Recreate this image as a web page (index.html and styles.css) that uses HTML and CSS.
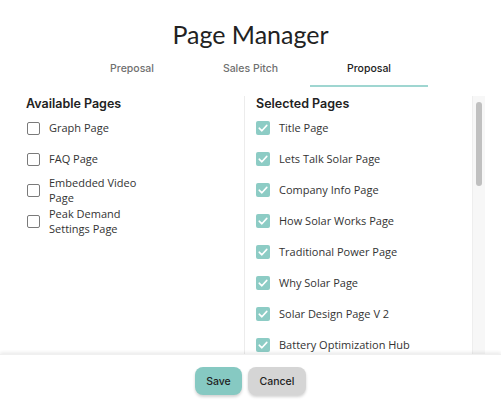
FILE: index.html
```html
<!DOCTYPE html>
<html>
<head>
<meta charset="utf-8">
<link rel="stylesheet" href="styles.css">
</head>
<body>
<div class="modal">
  <h1 class="title">Page Manager</h1>
  <nav class="tabs">
    <div class="tab">Preposal</div>
    <div class="tab">Sales Pitch</div>
    <div class="tab active">Proposal</div>
  </nav>
  <div class="content">
    <section class="col left">
      <h2 class="heading">Available Pages</h2>
      <div class="row"><span class="box"></span><span class="label">Graph Page</span></div>
      <div class="row"><span class="box"></span><span class="label">FAQ Page</span></div>
      <div class="row"><span class="box"></span><span class="label">Embedded Video<br>Page</span></div>
      <div class="row"><span class="box"></span><span class="label">Peak Demand<br>Settings Page</span></div>
    </section>
    <section class="col right">
      <h2 class="heading">Selected Pages</h2>
      <div class="row"><span class="box checked"><svg viewBox="0 0 14 14"><path d="M3.2 7.2 L5.9 9.8 L10.8 4.4"/></svg></span><span class="label">Title Page</span></div>
      <div class="row"><span class="box checked"><svg viewBox="0 0 14 14"><path d="M3.2 7.2 L5.9 9.8 L10.8 4.4"/></svg></span><span class="label">Lets Talk Solar Page</span></div>
      <div class="row"><span class="box checked"><svg viewBox="0 0 14 14"><path d="M3.2 7.2 L5.9 9.8 L10.8 4.4"/></svg></span><span class="label">Company Info Page</span></div>
      <div class="row"><span class="box checked"><svg viewBox="0 0 14 14"><path d="M3.2 7.2 L5.9 9.8 L10.8 4.4"/></svg></span><span class="label">How Solar Works Page</span></div>
      <div class="row"><span class="box checked"><svg viewBox="0 0 14 14"><path d="M3.2 7.2 L5.9 9.8 L10.8 4.4"/></svg></span><span class="label">Traditional Power Page</span></div>
      <div class="row"><span class="box checked"><svg viewBox="0 0 14 14"><path d="M3.2 7.2 L5.9 9.8 L10.8 4.4"/></svg></span><span class="label">Why Solar Page</span></div>
      <div class="row"><span class="box checked"><svg viewBox="0 0 14 14"><path d="M3.2 7.2 L5.9 9.8 L10.8 4.4"/></svg></span><span class="label">Solar Design Page V 2</span></div>
      <div class="row"><span class="box checked"><svg viewBox="0 0 14 14"><path d="M3.2 7.2 L5.9 9.8 L10.8 4.4"/></svg></span><span class="label">Battery Optimization Hub</span></div>
    </section>
    <div class="scrollbar"><div class="thumb"></div></div>
  </div>
  <footer class="footer">
    <button class="btn save">Save</button>
    <button class="btn cancel">Cancel</button>
  </footer>
</div>
</body>
</html>
```

FILE: styles.css
```css
html, body {
  margin: 0;
  padding: 0;
  background: #ffffff;
}
.modal {
  width: 501px;
  height: 400px;
  display: flex;
  flex-direction: column;
  overflow: hidden;
}
.title {
  margin: 18px 0 0;
  height: 32px;
  line-height: 32px;
  text-align: center;
  font-family: "Lato", "Noto Sans", sans-serif;
  font-weight: 400;
  font-size: 25px;
  color: #222;
  letter-spacing: 0;
}
.tabs {
  display: flex;
  justify-content: center;
  margin-top: 5px;
}
.tab {
  width: 118.5px;
  height: 32px;
  box-sizing: border-box;
  padding-top: 7px;
  text-align: center;
  font-family: "Inter", "Noto Sans", sans-serif;
  font-size: 10.5px;
  font-weight: 500;
  color: #707070;
  border-bottom: 2px solid transparent;
}
.tab.active {
  color: #222;
  border-bottom-color: #9fd6d1;
}
.content {
  display: flex;
  height: 258px;
  margin-top: 9px;
  overflow: hidden;
}
.col {
  display: flex;
  flex-direction: column;
  overflow: hidden;
}
.left {
  width: 218px;
  padding-left: 26px;
  border-right: 1px solid #ececec;
}
.right {
  flex: 1;
  padding-left: 11px;
}
.heading {
  margin: 0;
  height: 16.5px;
  line-height: 16px;
  font-family: "Inter", "Noto Sans", sans-serif;
  font-weight: 600;
  font-size: 12.5px;
  color: #222;
}
.row {
  flex: none;
  height: 31px;
  display: flex;
  align-items: center;
}
.box {
  flex: none;
  width: 13px;
  height: 13px;
  box-sizing: border-box;
  border: 1.5px solid #7a7a7a;
  border-radius: 2px;
  margin-left: 1px;
  margin-right: 9px;
  display: flex;
  align-items: center;
  justify-content: center;
}
.box.checked {
  border: none;
  background: #8dccc5;
  width: 14px;
  height: 14px;
  margin-left: 0;
}
.box svg {
  width: 14px;
  height: 14px;
  fill: none;
  stroke: #ffffff;
  stroke-width: 1.6;
  stroke-linecap: round;
  stroke-linejoin: round;
}
.label {
  font-family: "Open Sans", "Noto Sans", sans-serif;
  font-size: 11px;
  line-height: 15.5px;
  color: #333;
}
.scrollbar {
  flex: none;
  width: 13px;
  margin-right: 16px;
  background: #f7f7f7;
  border-left: 1px solid #eeeeee;
  box-sizing: border-box;
  padding: 6px 3px 0 3px;
}
.thumb {
  width: 6px;
  height: 84px;
  background: #c0c0c0;
  border-radius: 3px;
}
.footer {
  flex: 1;
  display: flex;
  justify-content: center;
  align-items: flex-start;
  gap: 6px;
  padding-top: 12px;
  box-shadow: 0 -2px 3px rgba(0, 0, 0, 0.07);
  border-top: 1px solid #f0f0f0;
}
.btn {
  height: 28px;
  border: none;
  border-radius: 8px;
  font-family: "Inter", "Noto Sans", sans-serif;
  font-size: 10.5px;
  font-weight: 500;
  color: #222;
  box-shadow: 0 2px 3px rgba(0, 0, 0, 0.18);
  padding: 0;
}
.save {
  width: 47px;
  background: #86c9c2;
}
.cancel {
  width: 58px;
  background: #d5d5d5;
}
```
